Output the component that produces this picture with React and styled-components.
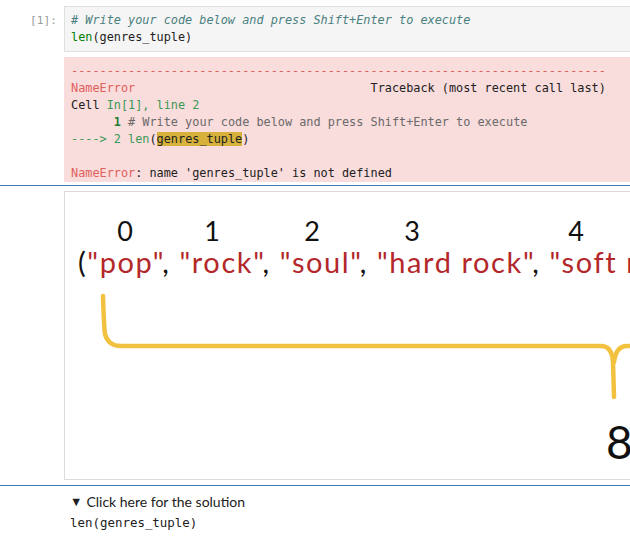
import React from 'react';
import styled, { createGlobalStyle } from 'styled-components';

const GlobalStyle = createGlobalStyle`
  html, body {
    margin: 0;
    padding: 0;
    background: #fff;
    overflow: hidden;
  }
  body {
    font-family: "Lato", "Noto Sans", sans-serif;
    color: #212121;
  }
`;

const mono = `"DejaVu Sans Mono", "Liberation Mono", monospace`;

const Notebook = styled.div`
  width: 720px;
`;

const Cell = styled.div`
  padding: ${p => p.$pad};
  border-top: ${p => (p.$selected ? '1px solid #3f79b0' : 'none')};
  border-bottom: ${p => (p.$selected ? '1px solid #3f79b0' : 'none')};
`;

const Row = styled.div`
  display: flex;
  align-items: flex-start;
  margin-top: ${p => p.$gap || 0}px;
`;

const Prompt = styled.div`
  width: 64px;
  flex: none;
  box-sizing: border-box;
  padding: 6px 7px 0 0;
  text-align: right;
  font-family: ${mono};
  font-size: 11.2px;
  line-height: 17px;
  color: #9a9a9a;
`;

const InputArea = styled.div`
  flex: 1;
  background: #f5f5f5;
  border: 1px solid #e0e0e0;
  padding: 5px 6px;
`;

const Code = styled.pre`
  margin: 0;
  font-family: ${mono};
  font-size: ${p => p.$size || 11.85}px;
  line-height: ${p => p.$lh || 17}px;
  white-space: pre;
  color: #212121;
`;

const Comment = styled.span`
  color: #4a8080;
  font-style: italic;
`;

const Builtin = styled.span`
  color: #008000;
`;

const ErrorOutput = styled.div`
  flex: 1;
  background: #f9dcdc;
  padding: 6px 7px 0;
  height: 119px;
  overflow: hidden;
`;

const Red = styled.span`
  color: #e0605c;
`;

const Green = styled.span`
  color: ${p => (p.$bold ? '#1e7a32' : '#3a9a55')};
  font-weight: ${p => (p.$bold ? 700 : 400)};
`;

const Gray = styled.span`
  color: #6a6a6a;
`;

const Highlight = styled.span`
  background: #d6b23c;
`;

const Figure = styled.div`
  position: relative;
  flex: 1;
  height: 287px;
  border: 1px solid #dcdcdc;
  border-right: none;
  background: #fff;
  overflow: hidden;
`;

const Index = styled.span`
  position: absolute;
  top: 22px;
  transform: translateX(-50%);
  font-family: "Lato", "Noto Sans", sans-serif;
  font-size: 27px;
  line-height: 34px;
  color: #111;
`;

const TupleLine = styled.div`
  padding: 53px 0 0 13px;
  font-family: "Lato", "Noto Sans", sans-serif;
  font-size: 29px;
  letter-spacing: 1.6px;
  line-height: 34px;
  white-space: nowrap;
  color: #111;
`;

const Str = styled.span`
  color: #b3282a;
`;

const BraceSvg = styled.svg`
  position: absolute;
  left: 0;
  top: 0;
  width: 100%;
  height: 100%;
  pointer-events: none;
`;

const Total = styled.span`
  position: absolute;
  left: 541px;
  top: 222px;
  font-family: "Lato", "Noto Sans", sans-serif;
  font-size: 46px;
  line-height: 56px;
  color: #111;
`;

const Solution = styled.div`
  padding-left: 70px;
`;

const Summary = styled.div`
  font-family: "Lato", "Noto Sans", sans-serif;
  font-size: 14px;
  line-height: 20px;
  color: #212121;
`;

const Triangle = styled.span`
  font-size: 12.5px;
  margin-right: 4px;
  position: relative;
  top: -1px;
`;

const indices = [
  { n: 0, x: 60 },
  { n: 1, x: 147 },
  { n: 2, x: 247 },
  { n: 3, x: 347 },
  { n: 4, x: 511 },
];

export default function App() {
  return (
    <>
      <GlobalStyle />
      <Notebook>
        <Cell $pad="6px 0 3px">
          <Row>
            <Prompt>[1]:</Prompt>
            <InputArea>
              <Code>
                <Comment># Write your code below and press Shift+Enter to execute</Comment>
                {'\n'}
                <Builtin>len</Builtin>(genres_tuple)
              </Code>
            </InputArea>
          </Row>
          <Row $gap={5}>
            <Prompt />
            <ErrorOutput>
              <Code>
                <Red>---------------------------------------------------------------------------</Red>
                {'\n'}
                <Red>NameError</Red>
                {'                                 Traceback (most recent call last)\n'}
                {'Cell '}
                <Green>In[1], line 2</Green>
                {'\n      '}
                <Green $bold>1</Green> <Gray># Write your code below and press Shift+Enter to execute</Gray>
                {'\n'}
                <Green>----&gt; 2</Green> <Green>len</Green>(<Highlight>genres_tuple</Highlight>)
                {'\n\n'}
                <Red>NameError</Red>: name 'genres_tuple' is not defined
              </Code>
            </ErrorOutput>
          </Row>
        </Cell>

        <Cell $pad="5px 0" $selected>
          <Row>
            <Prompt />
            <Figure>
              {indices.map(i => (
                <Index key={i.n} style={{ left: i.x }}>{i.n}</Index>
              ))}
              <TupleLine>
                (<Str>"pop"</Str>, <Str>"rock"</Str>, <Str>"soul"</Str>, <Str>"hard rock"</Str>, <Str>"soft rock"</Str>)
              </TupleLine>
              <BraceSvg>
                <g fill="none" stroke="#f2c140" strokeWidth="4.5" strokeLinecap="round">
                  <path d="M38 104 Q39 136 40 142 Q43 154 56 154 L536 154 Q547 154 548 170 L549 205" />
                  <path d="M549 170 Q551 154 562 154 L700 154" />
                </g>
              </BraceSvg>
              <Total>8</Total>
            </Figure>
          </Row>
        </Cell>

        <Cell $pad="6px 0 0">
          <Solution>
            <Summary>
              <Triangle>▼</Triangle>Click here for the solution
            </Summary>
            <Code $size={12.45} $lh={20}>len(genres_tuple)</Code>
          </Solution>
        </Cell>
      </Notebook>
    </>
  );
}
